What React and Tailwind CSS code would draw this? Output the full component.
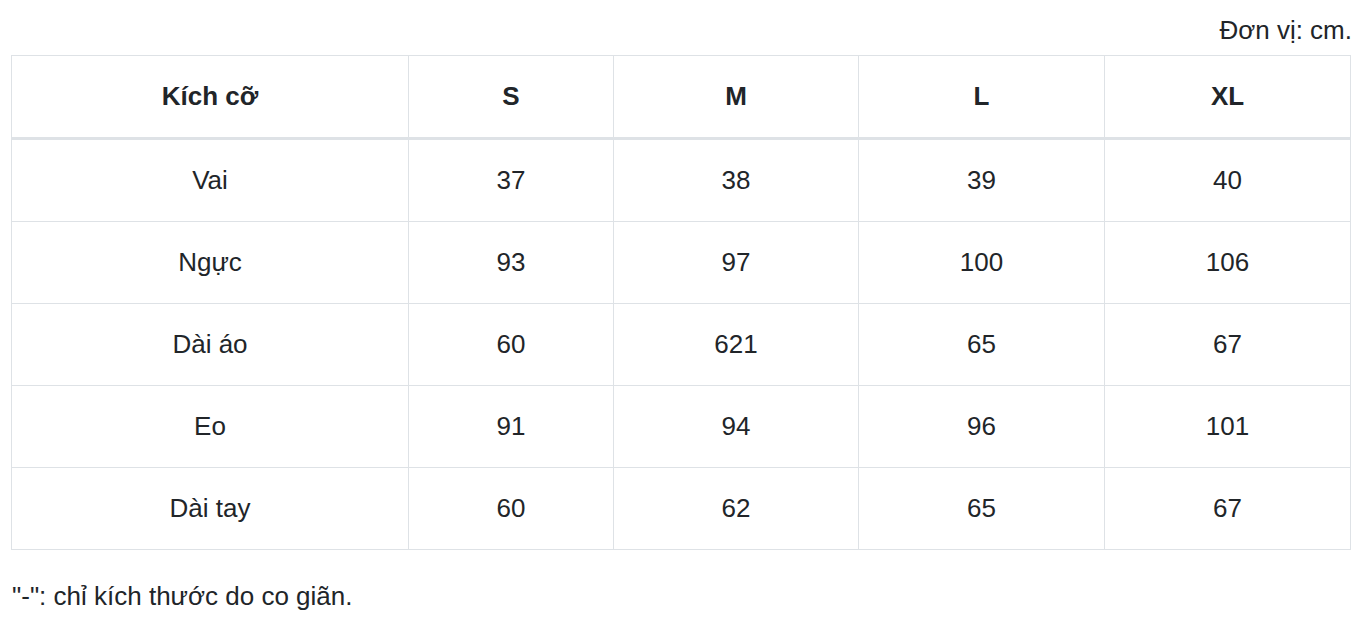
const sizes = ['S', 'M', 'L', 'XL'];

const rows = [
  ['Vai', '37', '38', '39', '40'],
  ['Ngực', '93', '97', '100', '106'],
  ['Dài áo', '60', '621', '65', '67'],
  ['Eo', '91', '94', '96', '101'],
  ['Dài tay', '60', '62', '65', '67'],
];

const cols = 'grid grid-cols-[397px_205px_245px_246px_246px]';

export default function App() {
  return (
    <div
      className="min-h-screen bg-white px-[11px] text-[26px] text-[#212529]"
      style={{ fontFamily: '"Liberation Sans", Arial, sans-serif' }}
    >
      <p className="pt-[11px] pr-[1px] text-right leading-[38px]">Đơn vị: cm.</p>
      <div className="mt-[6px] w-[1340px] border-l border-t border-[#dee2e6]">
        <div className={cols}>
          <div className="flex h-[84px] items-center justify-center border-b-[3px] border-r border-[#dee2e6] font-bold">
            Kích cỡ
          </div>
          {sizes.map((s) => (
            <div
              key={s}
              className="flex h-[84px] items-center justify-center border-b-[3px] border-r border-[#dee2e6] font-bold"
            >
              {s}
            </div>
          ))}
        </div>
        {rows.map((r) => (
          <div key={r[0]} className={cols}>
            {r.map((v, i) => (
              <div
                key={i}
                className="flex h-[82px] items-center justify-center border-b border-r border-[#dee2e6]"
              >
                {v}
              </div>
            ))}
          </div>
        ))}
      </div>
      <p className="mt-[27px] pl-[1px] leading-[38px]">"-": chỉ kích thước do co giãn.</p>
    </div>
  );
}
